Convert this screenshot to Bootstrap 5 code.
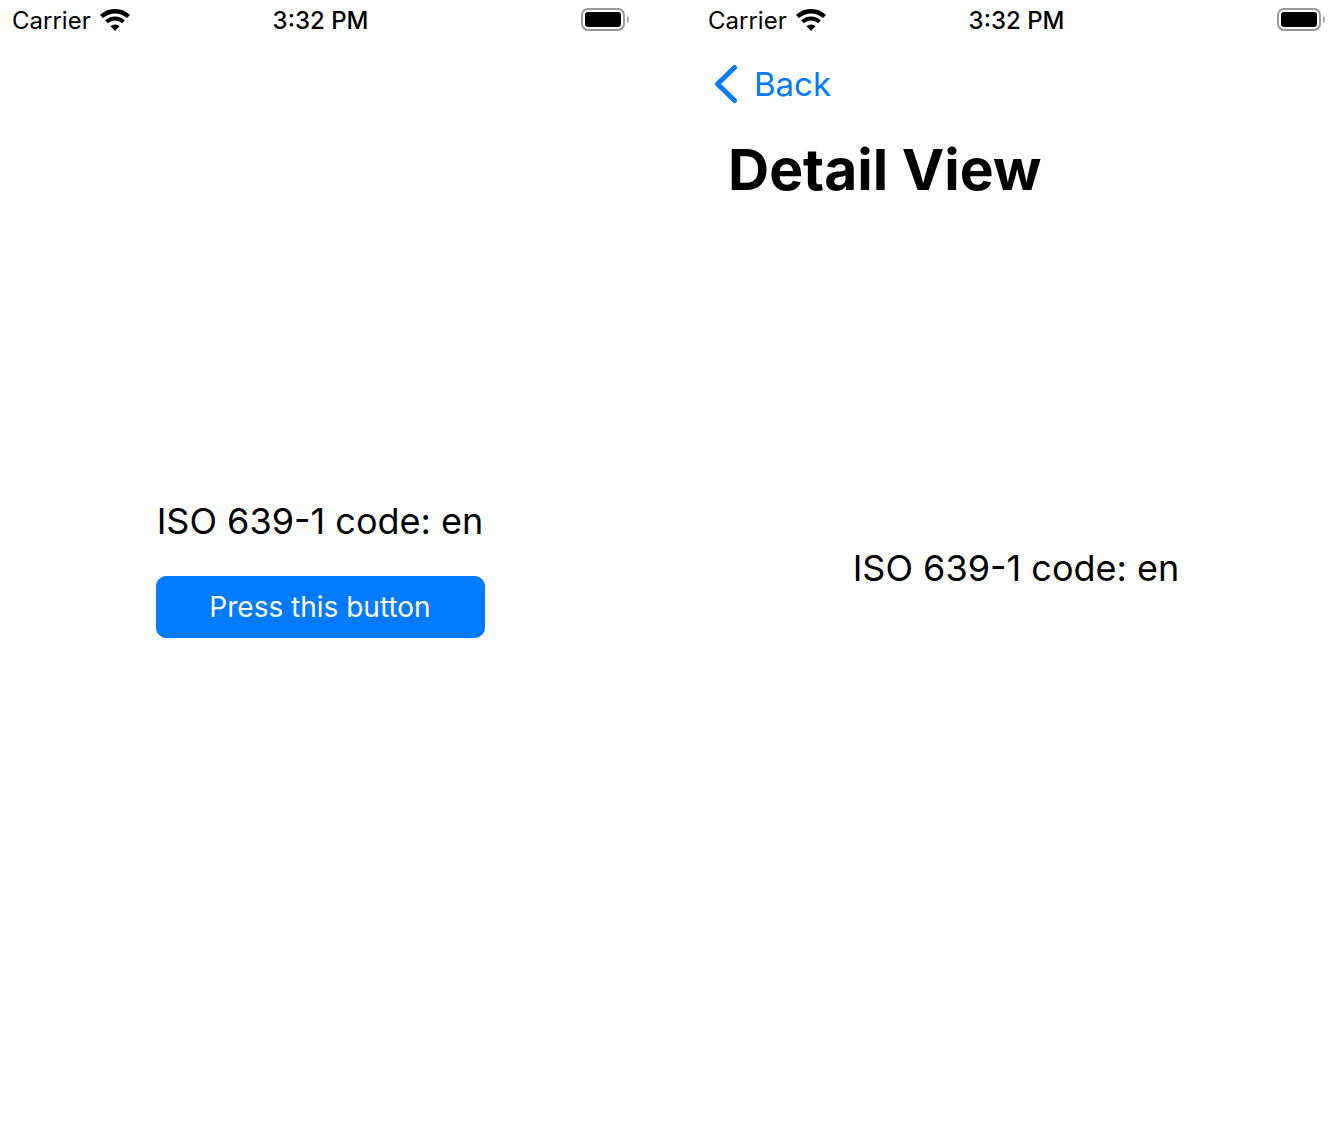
<!DOCTYPE html>
<html lang="en">
<head>
<meta charset="utf-8">
<meta name="viewport" content="width=device-width, initial-scale=1">
<title>Detail View</title>
<link href="https://cdn.jsdelivr.net/npm/bootstrap@5.3.0/dist/css/bootstrap.min.css" rel="stylesheet">
<style>
  body { font-family: Inter, "Liberation Sans", sans-serif; color: #000; background: #fff; }
  .screens { gap: 56px; }
  .phone { flex: 1 1 0; min-width: 0; }
  .edge { flex: 1 1 0; }
  .status { height: 40px; padding: 0 11px 0 12px; font-size: 24px; line-height: 40px; }
  .status svg { display: block; }
  .carrier { gap: 9px; }
  .carrier span, .clock { padding-top: 2px; }
  .clock { font-weight: 500; }
  .nav-row { height: 88px; padding-left: 14px; }
  .back { color: #007aff; font-size: 33px; line-height: 44px; gap: 16px; }
  .screen-title { padding-left: 32px; font-size: 57px; line-height: 84px; font-weight: 700; }
  .center-stack { gap: 32px; min-width: 329px; }
  .code-line { font-size: 36px; line-height: 46px; }
  .press { --bs-btn-bg: #007aff; --bs-btn-border-color: #007aff; --bs-btn-hover-bg: #0069d9; --bs-btn-border-radius: 10px; --bs-btn-font-size: 28px; --bs-btn-line-height: 36px; --bs-btn-padding-y: 12px; }
</style>
</head>
<body>
<svg class="d-none" aria-hidden="true">
  <symbol id="wifi" viewBox="0 0 30 22">
    <g fill="none" stroke="#000">
      <path stroke-width="4.400" d="M1.500 7.500 A19.800 19.800 0 0 1 28.500 7.500"/>
      <path stroke-width="4" d="M6.500 12.850 A12.500 12.500 0 0 1 23.500 12.850"/>
    </g>
    <path d="M15 22 L10.500 17.200 A6.600 6.600 0 0 1 19.500 17.200 Z"/>
  </symbol>
  <symbol id="battery" viewBox="0 0 48 24">
    <rect x="1" y="1" width="42" height="21" rx="6" fill="none" stroke="#999" stroke-width="2"/>
    <rect x="4" y="4" width="36" height="15" rx="3"/>
    <path d="M46 8 Q48 9 48 11.500 Q48 14 46 15 Z" fill="#999"/>
  </symbol>
</svg>
<div class="screens d-flex min-vh-100">
  <section class="phone d-flex flex-column" aria-label="Main screen">
    <header class="edge">
      <div class="status d-flex align-items-center">
        <div class="carrier edge d-flex align-items-center"><span>Carrier</span><svg width="30" height="22" role="img" aria-label="Wi-Fi"><use href="#wifi"/></svg></div>
        <div class="clock">3:32 PM</div>
        <div class="edge d-flex justify-content-end"><svg width="48" height="24" role="img" aria-label="Battery full"><use href="#battery"/></svg></div>
      </div>
    </header>
    <main class="center-stack d-flex flex-column align-self-center">
      <p class="code-line m-0 text-center">ISO 639-1 code: en</p>
      <button type="button" class="press btn btn-primary">Press this button</button>
    </main>
    <div class="edge"></div>
  </section>
  <section class="phone d-flex flex-column" aria-label="Detail screen">
    <header class="edge">
      <div class="status d-flex align-items-center">
        <div class="carrier edge d-flex align-items-center"><span>Carrier</span><svg width="30" height="22" role="img" aria-label="Wi-Fi"><use href="#wifi"/></svg></div>
        <div class="clock">3:32 PM</div>
        <div class="edge d-flex justify-content-end"><svg width="48" height="24" role="img" aria-label="Battery full"><use href="#battery"/></svg></div>
      </div>
      <nav class="nav-row d-flex align-items-center">
        <a href="#" class="back d-flex align-items-center text-decoration-none">
          <svg width="28" height="40" viewBox="0 0 28 40" fill="none" stroke="currentColor" stroke-width="5" stroke-linecap="round" stroke-linejoin="round" aria-hidden="true"><path d="M24.500 3.500 L7.500 20 L24.500 36.500"/></svg>
          <span>Back</span>
        </a>
      </nav>
      <h1 class="screen-title m-0">Detail View</h1>
    </header>
    <div class="center-stack d-flex flex-column align-self-center">
      <p class="code-line m-0 text-center">ISO 639-1 code: en</p>
    </div>
    <div class="edge"></div>
  </section>
</div>
<script src="https://cdn.jsdelivr.net/npm/bootstrap@5.3.0/dist/js/bootstrap.bundle.min.js"></script>
</body>
</html>
